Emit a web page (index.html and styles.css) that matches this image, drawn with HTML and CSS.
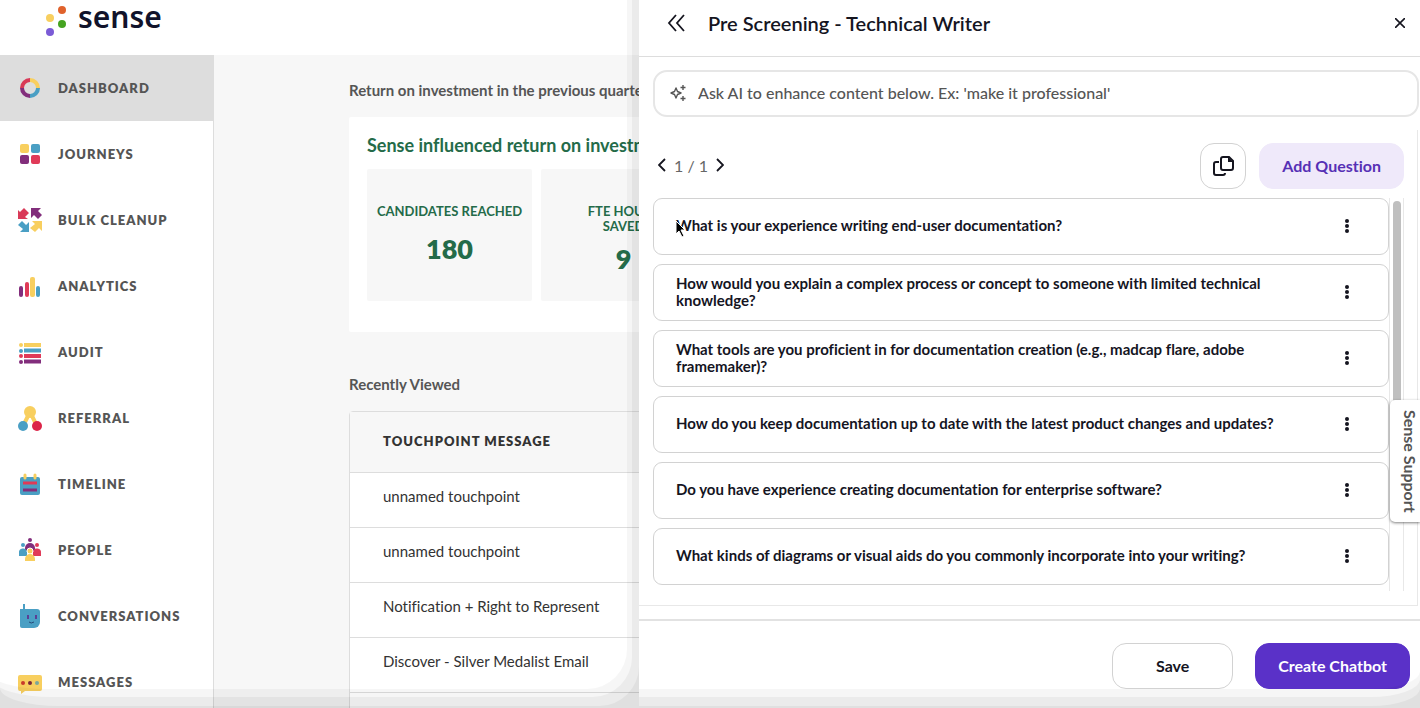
FILE: index.html
```html
<!DOCTYPE html>
<html lang="en">
<head>
    <meta charset="UTF-8">
    <meta name="viewport" content="width=device-width, initial-scale=1.0">
    <title>Sense - Dashboard</title>
    <link rel="stylesheet" href="styles.css">
</head>
<body>
    <div class="app">
        <header class="topbar">
            <a class="logo" href="#">
                <svg width="24" height="32" viewBox="0 0 24 32">
                    <circle cx="17" cy="6" r="4" fill="#e0622c"/>
                    <circle cx="5" cy="14" r="4" fill="#f8cf5f"/>
                    <circle cx="17" cy="20" r="4" fill="#45a321"/>
                    <circle cx="5" cy="28" r="4" fill="#7b5bd6"/>
                </svg>
                <span>sense</span>
            </a>
        </header>

        <div class="layout">
            <nav class="sidebar">
                <a class="nav-item active" href="#">
                    <svg width="26" height="26" viewBox="0 0 26 26" fill="none" stroke-width="4">
                        <path d="M13 5a8 8 0 0 1 8 8" stroke="#f8cf5f"/>
                        <path d="M21 13a8 8 0 0 1-8 8" stroke="#4a9fc4"/>
                        <path d="M13 21a8 8 0 0 1-8-8" stroke="#822e7c"/>
                        <path d="M5 13a8 8 0 0 1 8-8" stroke="#d93a58"/>
                    </svg>
                    Dashboard
                </a>
                <a class="nav-item" href="#">
                    <svg width="26" height="26" viewBox="0 0 26 26">
                        <rect x="3" y="3" width="9" height="9" rx="2" fill="#f8cf5f"/>
                        <rect x="14" y="3" width="9" height="9" rx="2" fill="#4a9fc4"/>
                        <rect x="3" y="14" width="9" height="9" rx="2" fill="#822e7c"/>
                        <rect x="14" y="14" width="9" height="9" rx="2" fill="#e03a58"/>
                    </svg>
                    Journeys
                </a>
                <a class="nav-item" href="#">
                    <svg width="26" height="26" viewBox="0 0 26 26">
                        <path d="M1 12V3l2 2 4-4 5 5-4 4 3 2z" fill="#d93a58"/>
                        <path d="M14 1h10l-3 3 4 4-4 4-4-4-3 3z" fill="#822e7c"/>
                        <path d="M12 25H3l3-3-5-4 4-4 4 4 3-3z" fill="#4a9fc4"/>
                        <path d="M25 14v10l-3-3-4 4-5-4 5-4-3-3z" fill="#f8cf5f"/>
                    </svg>
                    Bulk Cleanup
                </a>
                <a class="nav-item" href="#">
                    <svg width="26" height="26" viewBox="0 0 26 26">
                        <rect x="2" y="13" width="4" height="11" rx="2" fill="#822e7c"/>
                        <rect x="8" y="9" width="4" height="15" rx="2" fill="#e03a58"/>
                        <rect x="13" y="4" width="5" height="20" rx="2" fill="#f8cf5f"/>
                        <rect x="19" y="13" width="4" height="11" rx="2" fill="#4a9fc4"/>
                    </svg>
                    Analytics
                </a>
                <a class="nav-item" href="#">
                    <svg width="26" height="26" viewBox="0 0 26 26">
                        <g fill="#f8cf5f"><circle cx="4" cy="6" r="2"/><path d="M7 4h17v4H7z"/></g>
                        <g fill="#4a9fc4"><circle cx="4" cy="12" r="2"/><path d="M7 9.500h17v4H7z"/></g>
                        <g fill="#e03a58"><circle cx="4" cy="17" r="2"/><path d="M7 15h17v4H7z"/></g>
                        <g fill="#822e7c"><circle cx="4" cy="23" r="2"/><path d="M7 20.500h17v4H7z"/></g>
                    </svg>
                    Audit
                </a>
                <a class="nav-item" href="#">
                    <svg width="26" height="26" viewBox="0 0 26 26">
                        <path d="M13 7L7 19M13 7l6 12" stroke="#f8cf5f" stroke-width="4"/>
                        <circle cx="13" cy="7" r="6" fill="#f8cf5f"/>
                        <circle cx="6" cy="21" r="5" fill="#4a9fc4"/>
                        <circle cx="20" cy="21" r="5" fill="#dc2548"/>
                    </svg>
                    Referral
                </a>
                <a class="nav-item" href="#">
                    <svg width="26" height="26" viewBox="0 0 26 26">
                        <rect x="3" y="6" width="20" height="18" rx="2" fill="#4a9fc4"/>
                        <path d="M8 4v3M18 4v3" stroke="#f8cf5f" stroke-width="3" stroke-linecap="round"/>
                        <path d="M6 12h14" stroke="#e03a58" stroke-width="3"/>
                        <path d="M6 19h14" stroke="#822e7c" stroke-width="3"/>
                    </svg>
                    Timeline
                </a>
                <a class="nav-item" href="#">
                    <svg width="26" height="26" viewBox="0 0 26 26">
                        <circle cx="13" cy="3" r="2" fill="#822e7c"/>
                        <path d="M8 14v-3a5 5 0 0 1 10 0v3z" fill="#822e7c"/>
                        <circle cx="6" cy="8" r="2" fill="#4a9fc4"/>
                        <path d="M2 19v-3a4 4 0 0 1 8-1v4z" fill="#4a9fc4"/>
                        <circle cx="20" cy="8" r="2" fill="#e03a58"/>
                        <path d="M24 19v-3a4 4 0 0 0-8-1v4z" fill="#e03a58"/>
                        <circle cx="13" cy="14" r="3" fill="#f8cf5f" stroke="#fff"/>
                        <path d="M8 24v-2a5 5 0 0 1 10 0v2z" fill="#f8cf5f"/>
                    </svg>
                    People
                </a>
                <a class="nav-item" href="#">
                    <svg width="26" height="26" viewBox="0 0 26 26">
                        <path d="M7 1v6" stroke="#4a9fc4" stroke-width="2"/>
                        <path d="M3 6h17a3 3 0 0 1 3 3v10a6 6 0 0 1-6 6H5a2 2 0 0 1-2-2z" fill="#4a9fc4"/>
                        <path d="M11 12v4M19 12v4" stroke="#5b3f95" stroke-width="2"/>
                        <path d="M12 19q2 2 5 0" stroke="#264a78" fill="none"/>
                    </svg>
                    Conversations
                </a>
                <a class="nav-item" href="#">
                    <svg width="26" height="26" viewBox="0 0 26 26">
                        <path d="M3 6h20a2 2 0 0 1 2 2v12a2 2 0 0 1-2 2H8l-4 3v-3H3a2 2 0 0 1-2-2V8a2 2 0 0 1 2-2z" fill="#f8cf5f"/>
                        <circle cx="6" cy="14" r="2" fill="#c93a2b"/>
                        <circle cx="13" cy="14" r="2" fill="#7c2639"/>
                        <circle cx="20" cy="14" r="2" fill="#7aa79a"/>
                    </svg>
                    Messages
                </a>
            </nav>

            <main class="content">
                <h2>Return on investment in the previous quarter</h2>
                <section class="roi-card">
                    <h3>Sense influenced return on investment</h3>
                    <div class="tiles">
                        <div class="tile">
                            <div class="tile-label">Candidates Reached</div>
                            <div class="tile-value">180</div>
                        </div>
                        <div class="tile">
                            <div class="tile-label">FTE Hours<br>Saved</div>
                            <div class="tile-value">9</div>
                        </div>
                    </div>
                </section>

                <h2>Recently Viewed</h2>
                <table class="recent">
                    <thead>
                        <tr><th>Touchpoint Message</th></tr>
                    </thead>
                    <tbody>
                        <tr><td>unnamed touchpoint</td></tr>
                        <tr><td>unnamed touchpoint</td></tr>
                        <tr><td>Notification + Right to Represent</td></tr>
                        <tr><td>Discover - Silver Medalist Email</td></tr>
                        <tr><td></td></tr>
                    </tbody>
                </table>
            </main>
        </div>
        <div class="edge edge-page"></div>
    </div>

    <aside class="drawer">
        <header class="drawer-header">
            <button class="icon-btn" aria-label="Back">
                <svg width="18" height="18" viewBox="0 0 18 18" fill="none" stroke="#15151f" stroke-width="1.800">
                    <path d="M9 1L2 9l7 8M17 1l-7 8 7 8"/>
                </svg>
            </button>
            <h1>Pre Screening - Technical Writer</h1>
            <button class="icon-btn" aria-label="Close">
                <svg width="10" height="10" viewBox="0 0 10 10" stroke="#15151f" stroke-width="1.600">
                    <path d="M0 0l10 10M10 0L0 10"/>
                </svg>
            </button>
        </header>

        <label class="ai-box">
            <svg width="16" height="16" viewBox="0 0 16 16" fill="none" stroke="#555" stroke-width="1.400">
                <path d="M6 3l1.500 3.500L11 8 7.500 9.500 6 13 4.500 9.500 1 8l3.500-1.500z" stroke-linejoin="round"/>
                <path d="M13 0v5M10.500 2.500h5M13 11v5M10.500 13.500h5"/>
            </svg>
            <input type="text" aria-label="Ask AI" placeholder="Ask AI to enhance content below. Ex: 'make it professional'">
        </label>

        <section class="questions">
            <div class="toolbar">
                <div class="pager">
                    <button class="icon-btn" aria-label="Previous page">
                        <svg width="8" height="14" viewBox="0 0 8 14" fill="none" stroke="#15151f" stroke-width="1.800"><path d="M7 1L1 7l6 6"/></svg>
                    </button>
                    <span>1 / 1</span>
                    <button class="icon-btn" aria-label="Next page">
                        <svg width="8" height="14" viewBox="0 0 8 14" fill="none" stroke="#15151f" stroke-width="1.800"><path d="M1 1l6 6-6 6"/></svg>
                    </button>
                </div>
                <button class="btn btn-copy" aria-label="Copy">
                    <svg width="22" height="22" viewBox="0 0 22 22" fill="none" stroke="#15151f" stroke-width="2">
                        <path d="M11 2h6l4 4v7a2 2 0 0 1-2 2h-8a2 2 0 0 1-2-2V4a2 2 0 0 1 2-2z"/>
                        <path d="M16 2v5h5z" fill="#15151f" stroke="none"/>
                        <path d="M7 7H4a2 2 0 0 0-2 2v9a2 2 0 0 0 2 2h7a2 2 0 0 0 2-2"/>
                    </svg>
                </button>
                <button class="btn btn-soft">Add Question</button>
            </div>

            <div class="list-wrap">
                <ul class="list">
                    <li class="question"><span>What is your experience writing end-user documentation?</span><button class="more" aria-label="More"><i></i><i></i><i></i></button></li>
                    <li class="question"><span>How would you explain a complex process or concept to someone with limited technical knowledge?</span><button class="more" aria-label="More"><i></i><i></i><i></i></button></li>
                    <li class="question"><span>What tools are you proficient in for documentation creation (e.g., madcap flare, adobe framemaker)?</span><button class="more" aria-label="More"><i></i><i></i><i></i></button></li>
                    <li class="question"><span>How do you keep documentation up to date with the latest product changes and updates?</span><button class="more" aria-label="More"><i></i><i></i><i></i></button></li>
                    <li class="question"><span>Do you have experience creating documentation for enterprise software?</span><button class="more" aria-label="More"><i></i><i></i><i></i></button></li>
                    <li class="question"><span>What kinds of diagrams or visual aids do you commonly incorporate into your writing?</span><button class="more" aria-label="More"><i></i><i></i><i></i></button></li>
                </ul>
                <div class="track"><div class="thumb"></div></div>
            </div>
        </section>

        <footer class="drawer-footer">
            <button class="btn btn-save">Save</button>
            <button class="btn btn-primary">Create Chatbot</button>
        </footer>
        <div class="edge edge-drawer"></div>
    </aside>

    <button class="support-tab">Sense Support</button>

    <svg class="cursor" width="12" height="18" viewBox="0 0 12 18">
        <path d="M1 1v13l3-3 3 6 2-1-3-6h4z" fill="#000" stroke="#fff"/>
    </svg>
</body>
</html>
```
FILE: styles.css
```css
* {
    box-sizing: border-box;
}

body {
    margin: 0;
    height: 100vh;
    overflow: hidden;
    position: relative;
    font-family: Lato, "Liberation Sans", sans-serif;
    font-variant-ligatures: none;
    color: #333;
    background: #fff;
}

h1, h2, h3, ul {
    margin: 0;
    padding: 0;
}

button {
    font-family: inherit;
    font-variant-ligatures: inherit;
    cursor: pointer;
}

.app {
    height: 100vh;
    display: flex;
    flex-direction: column;
}

.topbar {
    flex: none;
    height: 55px;
    padding-left: 45px;
}

.logo {
    display: flex;
    gap: 9px;
    align-items: flex-start;
    padding-top: 4px;
    color: #11132b;
    text-decoration: none;
    font-family: "Noto Sans", sans-serif;
    font-size: 30px;
    font-weight: 600;
    line-height: 26px;
}

.layout {
    display: flex;
    flex: 1;
    min-height: 0;
    overflow: hidden;
}

/* sidebar */
.sidebar {
    flex: none;
    width: 214px;
    border-right: 1px solid #ddd;
}

.nav-item {
    display: flex;
    align-items: center;
    gap: 15px;
    height: 66px;
    padding-left: 17px;
    color: #555;
    text-decoration: none;
    text-transform: uppercase;
    font-size: 13px;
    font-weight: 800;
    letter-spacing: 1px;
}

.nav-item.active {
    background: #ddd;
}

/* dashboard */
.content {
    flex: 1;
    padding: 25px 135px 0;
    background: #f7f7f7;
    overflow: hidden;
}

.content h2 {
    font-size: 15px;
    line-height: 20px;
    color: #555;
}

.roi-card {
    margin: 17px 0 42px;
    padding: 18px;
    height: 215px;
    background: #fff;
    border-radius: 2px;
}

.roi-card h3 {
    margin-bottom: 14px;
    font-size: 18px;
    line-height: 20px;
    color: #246b49;
}

.tiles {
    display: flex;
    gap: 9px;
}

.tile {
    width: 165px;
    height: 132px;
    padding-top: 35px;
    background: #f7f7f7;
    border-radius: 2px;
    text-align: center;
    color: #246b49;
    font-weight: 700;
}

.tile-label {
    min-height: 20px;
    font-size: 13px;
    line-height: 15px;
    text-transform: uppercase;
}

.tile-value {
    margin-top: 9px;
    font-size: 27px;
    font-weight: 800;
    line-height: 32px;
}

.recent {
    width: 100%;
    margin-top: 17px;
    border: 1px solid #ddd;
    border-radius: 4px;
    border-spacing: 0;
    text-align: left;
    background: #fff;
}

.recent th {
    height: 60px;
    padding: 0 33px 2px;
    background: #f7f7f7;
    font-size: 13px;
    font-weight: 800;
    letter-spacing: 1px;
    text-transform: uppercase;
}

.recent td {
    height: 55px;
    padding: 0 33px 8px;
    border-top: 1px solid #ddd;
    font-size: 15px;
}

/* drawer */
.drawer {
    position: absolute;
    top: 0;
    right: 0;
    bottom: 0;
    width: 55%;
    display: flex;
    flex-direction: column;
    overflow: hidden;
    background: #fff;
    color: #15151f;
}

.drawer-header {
    display: flex;
    align-items: center;
    gap: 23px;
    height: 57px;
    padding: 0 15px 10px 28px;
    border-bottom: 1px solid #ddd;
}

.drawer-header h1 {
    flex: 1;
    font-size: 20px;
    font-weight: 600;
    line-height: 24px;
}

.icon-btn {
    display: flex;
    padding: 0;
    border: 0;
    background: none;
}

.ai-box {
    display: flex;
    align-items: center;
    gap: 12px;
    height: 47px;
    margin: 13px 1px 13px 14px;
    padding: 0 15px 2px;
    border: 2px solid #e6e6e6;
    border-radius: 14px;
}

.ai-box input {
    flex: 1;
    padding: 0;
    border: 0;
    outline: 0;
    font-family: inherit;
    font-size: 16px;
    font-weight: 500;
}

.ai-box input::placeholder {
    color: #555;
}

.questions {
    flex: 1;
    min-height: 0;
    display: flex;
    flex-direction: column;
    margin-right: 2px;
    padding: 13px 13px 14px 14px;
    border-right: 1px solid #e8e8e8;
    border-bottom: 1px solid #e8e8e8;
}

.toolbar {
    display: flex;
    gap: 13px;
    margin-bottom: 9px;
}

.pager {
    flex: 1;
    display: flex;
    align-items: center;
    gap: 8px;
    padding: 0 0 2px 5px;
    font-size: 16px;
    color: #666;
}

.btn {
    height: 46px;
    padding: 0 22px 2px;
    border: 1px solid #d2d2d2;
    border-radius: 14px;
    background: #fff;
    color: #15151f;
    font-size: 16px;
    font-weight: 700;
}

.btn-copy {
    padding: 0 11px;
}

.btn-copy svg {
    display: block;
}

.btn-soft {
    border-color: #efe9fa;
    background: #efe9fa;
    color: #5630b5;
}

.list-wrap {
    flex: 1;
    min-height: 0;
    display: flex;
}

.list {
    flex: 1;
    display: flex;
    flex-direction: column;
    gap: 9px;
    list-style: none;
    overflow: hidden;
}

.question {
    flex: none;
    display: flex;
    align-items: center;
    justify-content: space-between;
    height: 57px;
    padding: 0 37px 2px 22px;
    border: 1px solid #d2d2d2;
    border-radius: 9px;
    font-size: 15px;
    line-height: 17px;
    font-weight: 700;
}

.question span {
    max-width: 630px;
}

.more {
    display: flex;
    flex-direction: column;
    gap: 1px;
    padding: 2px;
    border: 0;
    background: none;
}

.more i {
    width: 4px;
    height: 4px;
    border-radius: 50%;
    background: #15151f;
}

.track {
    width: 15px;
    padding: 3px 2px 0 3px;
    border-right: 1px solid #e8e8e8;
    border-left: 1px solid #e8e8e8;
}

.thumb {
    width: 8px;
    height: 58%;
    border-radius: 4px;
    background: #bfbfbf;
}

.drawer-footer {
    display: flex;
    justify-content: flex-end;
    gap: 22px;
    margin-top: 13px;
    padding: 22px 10px 19px;
    border-top: 2px solid #e2e2e2;
}

.btn-save {
    min-width: 121px;
}

.btn-primary {
    border-color: #5a31c8;
    background: #5a31c8;
    color: #fff;
}

/* tab on the right edge */
.support-tab {
    position: absolute;
    right: 0;
    top: 400px;
    height: 122px;
    width: 30px;
    padding: 0 0 0 9px;
    border: 0;
    border-radius: 5px 0 0 5px;
    background: #fff;
    box-shadow: 0 1px 3px rgba(0, 0, 0, 0.5);
    color: #555;
    font-size: 16px;
    font-weight: 700;
    line-height: 20px;
    writing-mode: vertical-rl;
}

/* stepped shade along the window edges */
.edge {
    position: absolute;
    top: -60px;
    bottom: -60px;
    left: 0;
    pointer-events: none;
}

.edge-page {
    width: 45%;
    border-radius: 0 0 40px 60px / 0 0 40px 18px;
    box-shadow: inset -12px -79px 0 rgba(0, 0, 0, 0.035),
                inset -7px -71px 0 rgba(0, 0, 0, 0.045),
                inset 0 -62px 0 rgba(0, 0, 0, 0.045);
}

.edge-drawer {
    right: 0;
    border-radius: 0 0 50px 0 / 0 0 18px 0;
    box-shadow: inset 0 -79px 0 rgba(0, 0, 0, 0.035),
                inset 0 -71px 0 rgba(0, 0, 0, 0.045),
                inset 0 -62px 0 rgba(0, 0, 0, 0.045);
}

.cursor {
    position: absolute;
    top: 220px;
    left: 675px;
}
```
